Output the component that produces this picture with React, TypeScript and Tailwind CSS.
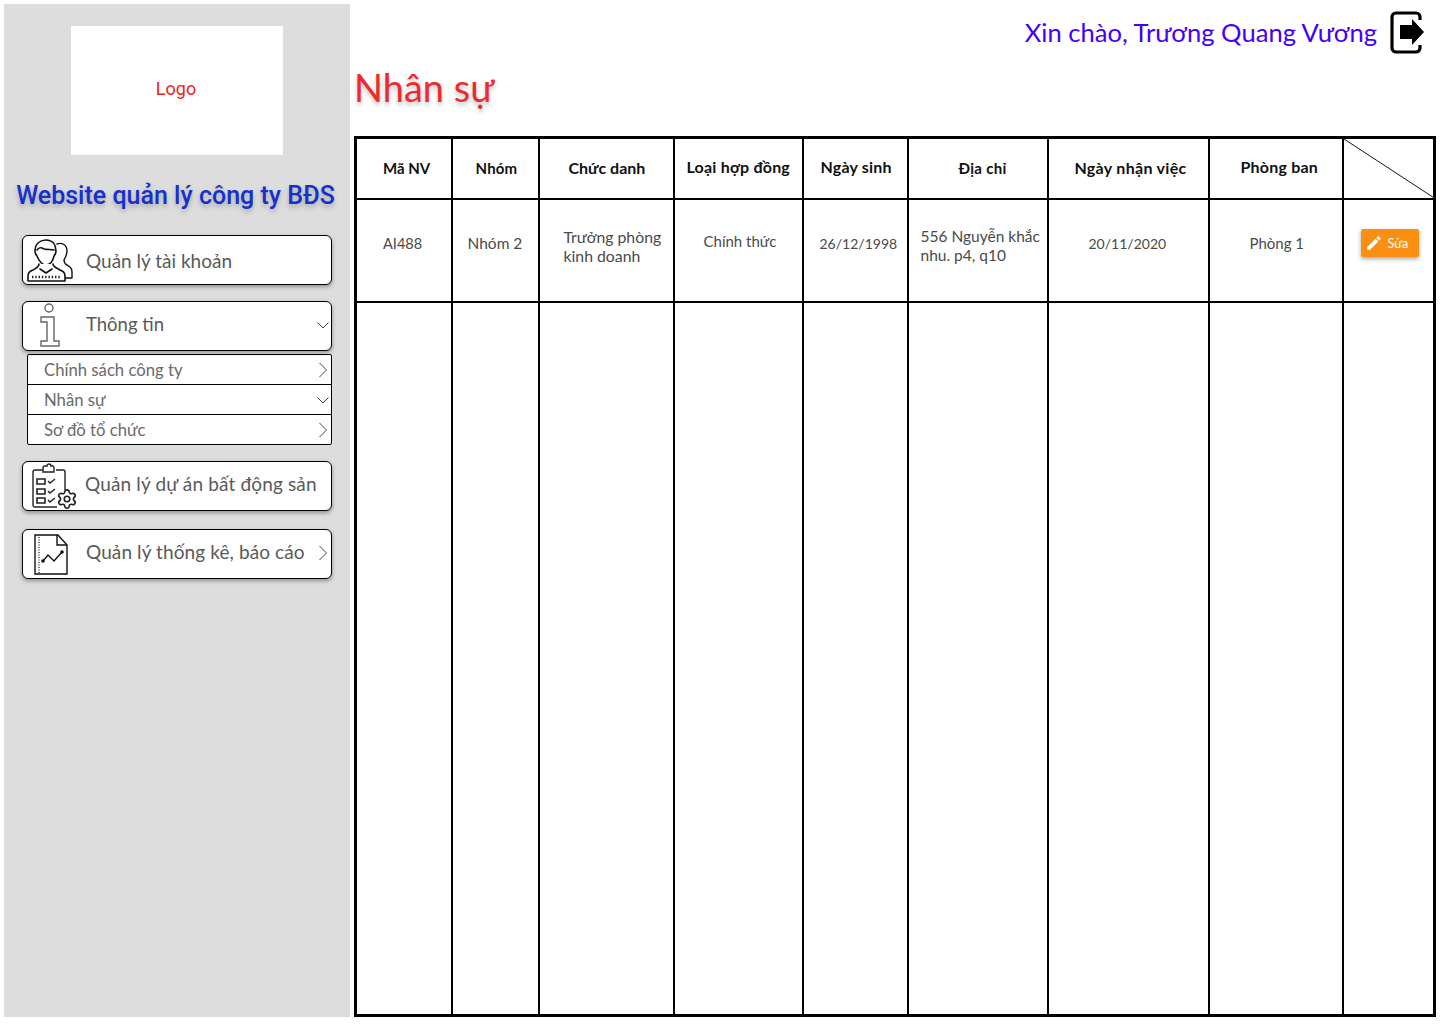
import React from "react";
import { Settings } from "lucide-react";

const quick = "font-['Lato','Noto_Sans',sans-serif]";
const roboto = "font-['Roboto',sans-serif]";

const Chevron = ({ down }: { down?: boolean }) => (
  <svg width="14" height="16" viewBox="0 0 14 16" fill="none" stroke="#444" strokeWidth="1">
    {down ? <path d="M1.500 5.500 7 11l5.500-5.500" /> : <path d="M3.500 1l7 7-7 7" />}
  </svg>
);

const PersonIcon = () => (
  <svg width="46" height="43" viewBox="0 0 46 43" fill="none" stroke="#111" strokeWidth="1.600" strokeLinejoin="round" strokeLinecap="round">
    <path d="M30 5c5-2 10 1 10 7 0 4-2 7-3 9 0 3 1 4 3 5 3 2 5 3 5 7v6h-7" strokeWidth="1.400" />
    <path d="M8 12C8 4 14 1 19 1c7 0 10 5 10 11 0 3-1 4-2 5-1 5-4 9-8 9s-7-4-9-9c-1-1-2-2-2-5z" fill="#fff" />
    <path d="M10 11c2-3 4-3 7-1 4 1 7 0 10 1" />
    <path d="M12 25c0 3-3 4-6 6-3 1-5 3-5 6v5h37v-5c0-3-2-5-5-6-3-2-7-3-7-6" fill="#fff" />
    <path d="M13 30l6 4 6-4" />
    <path d="M5 38h28" strokeDasharray="1.300 2" strokeWidth="2.600" strokeLinecap="butt" />
  </svg>
);

const InfoIcon = () => (
  <svg width="22" height="44" viewBox="0 0 22 44" fill="none" stroke="#666" strokeWidth="1.400">
    <circle cx="10" cy="5" r="4" />
    <path d="M2 14h13v24h5v5H2v-5h6V19H2z" />
  </svg>
);

const ProjectIcon = () => (
  <svg width="46" height="47" viewBox="0 0 46 47" fill="none" stroke="#222" strokeWidth="1.400">
    <path d="M24 7h7a2 2 0 0 1 2 2v18M25 44H3a2 2 0 0 1-2-2V9a2 2 0 0 1 2-2h8" />
    <path d="M11 9V5a2 2 0 0 1 2-2h2a2 2 0 0 1 4 0 2 2 0 0 1 3 2v4z" />
    <path d="M5 16h8v5H5zM5 26h8v5H5zM5 35h8v5H5z" strokeWidth="1.600" />
    <path d="M16 18l2 2 5-4M16 28l2 2 5-4M16 37l2 2 5-4" />
    <Settings x="24" y="25" width="22" height="22" strokeWidth="1.800" color="#222" />
  </svg>
);

const ChartIcon = () => (
  <svg width="34" height="41" viewBox="0 0 34 41" fill="none" stroke="#111" strokeWidth="1.400">
    <path d="M1 1h23l9 10v29H1z" />
    <path d="M23 1v10h10" />
    <path d="M5 3v36" strokeDasharray="1 1.500" strokeWidth="1.200" />
    <path d="M9 27l5-6 6 6 8-9" strokeWidth="1.400" />
    <circle cx="9" cy="27" r="1.100" fill="#111" />
    <circle cx="28" cy="18" r="1.100" fill="#111" />
  </svg>
);

const LogoutIcon = () => (
  <svg width="34" height="43" viewBox="0 0 34 43" fill="none">
    <path d="M30 9V6a4 4 0 0 0-4-4H6a4 4 0 0 0-4 4v31a4 4 0 0 0 4 4h20a4 4 0 0 0 4-4v-3" stroke="#000" strokeWidth="3.200" />
    <path d="M10 14h12V8l12 13-12 13v-6H10z" fill="#000" />
  </svg>
);

type MenuProps = {
  icon: React.ReactNode;
  iconCls: string;
  label: string;
  labelCls?: string;
  right?: React.ReactNode;
  className?: string;
};

const MenuCard = ({ icon, iconCls, label, labelCls, right, className }: MenuProps) => (
  <div className={`relative flex h-[50px] w-[310px] items-center rounded-[6px] border border-black bg-white shadow-[0_2px_4px_rgba(0,0,0,0.35)] ${className ?? ""}`}>
    <div className={`flex w-[63px] shrink-0 ${iconCls}`}>{icon}</div>
    <span className={`text-[#5a5a5a] ${labelCls ?? "text-[19px]"}`}>{label}</span>
    {right && <span className="absolute right-[1px] top-[15px]">{right}</span>}
  </div>
);

const SubRow = ({ label, down }: { label: string; down?: boolean }) => (
  <div className="flex h-[30px] items-center justify-between border-b border-black pl-[16px] pr-[1px] text-[16.700px] text-[#6a6a6a] last:h-[29px] last:border-b-0">
    <span className="pt-[2px]">{label}</span>
    <Chevron down={down} />
  </div>
);

const headers = [
  { w: "w-[96px]", label: "Mã NV", cls: "pl-[26px] text-[15px]" },
  { w: "w-[87px]", label: "Nhóm", cls: "pl-[23px] text-[15px] tracking-[0.200px]" },
  { w: "w-[135px]", label: "Chức danh", cls: "pl-[29px] text-[16px]" },
  { w: "w-[129px]", label: "Loại hợp đồng", cls: "pl-[12px] pb-[3px] text-[16px] tracking-[0.200px]" },
  { w: "w-[105px]", label: "Ngày sinh", cls: "pl-[17px] pb-[3px] text-[16px] tracking-[0.200px]" },
  { w: "w-[140px]", label: "Địa chỉ", cls: "pl-[50px] text-[15px] tracking-[0.300px]" },
  { w: "w-[161px]", label: "Ngày nhận việc", cls: "pl-[26px] text-[16px] tracking-[0.300px]" },
  { w: "w-[134px]", label: "Phòng ban", cls: "pl-[31px] pb-[3px] text-[16px] tracking-[0.200px]" },
];

const cells = [
  { lines: ["AI488"], cls: "pl-[26px] pb-[13px] text-[14.500px]" },
  { lines: ["Nhóm 2"], cls: "pl-[15px] pb-[13px] text-[15.500px]" },
  { lines: ["Trưởng phòng", "kinh doanh"], cls: "pl-[24px] pb-[9px] text-[15.800px]" },
  { lines: ["Chính thức"], cls: "pl-[29px] pb-[17px] text-[15px]" },
  { lines: ["26/12/1998"], cls: "pl-[16px] pb-[13px] text-[14px]" },
  { lines: ["556 Nguyễn khắc", "nhu. p4, q10"], cls: "pl-[12px] pb-[8px] text-[15.500px]" },
  { lines: ["20/11/2020"], cls: "pl-[40px] pb-[13px] text-[14px]" },
  { lines: ["Phòng 1"], cls: "pl-[40px] pb-[13px] text-[15px]" },
];

export default function App() {
  return (
    <div className={`flex h-[1024px] w-[1440px] overflow-hidden bg-white ${quick}`}>
      <aside className="ml-[4px] mt-[4px] h-[1013px] w-[346px] shrink-0 bg-[#dddddd]">
        <div className={`ml-[67px] mt-[22px] flex h-[129px] w-[212px] items-center justify-center bg-white pb-[4px] pr-[2px] text-[18px] text-[#ee2222] ${roboto}`}>
          Logo
        </div>
        <h2 className={`mt-[26px] pr-[3px] text-center text-[25px] leading-[30px] font-medium text-[#1530cf] [text-shadow:0_3px_5px_rgba(0,0,0,0.25)] ${roboto}`}>
          Website quản lý công ty BĐS
        </h2>
        <nav className="ml-[18px] mt-[24px] flex flex-col">
          <MenuCard icon={<PersonIcon />} iconCls="pl-[4px]" label="Quản lý tài khoản" labelCls="pt-[2px] text-[19px]" />
          <MenuCard icon={<InfoIcon />} iconCls="pl-[16px] pb-[3px]" label="Thông tin" labelCls="pb-[2px] text-[18.500px]" right={<Chevron down />} className="mt-[16px]" />
          <div className="ml-[5px] mt-[3px] w-[305px] rounded-[2px] border border-black bg-white">
            <SubRow label="Chính sách công ty" />
            <SubRow label="Nhân sự" down />
            <SubRow label="Sơ đồ tổ chức" />
          </div>
          <MenuCard icon={<ProjectIcon />} iconCls="pl-[9px]" label="Quản lý dự án bất động sản" labelCls="-ml-[1px] pb-[3px] text-[19px] tracking-[0.150px]" className="mt-[16px]" />
          <MenuCard icon={<ChartIcon />} iconCls="pl-[11px]" label="Quản lý thống kê, báo cáo" labelCls="pb-[3px] text-[19px] tracking-[0.100px]" right={<Chevron />} className="mt-[18px]" />
        </nav>
      </aside>

      <main className="ml-[4px] flex w-[1082px] shrink-0 flex-col">
        <div className="mt-[11px] flex h-[43px] items-center justify-end pr-[12px]">
          <span className="mr-[13px] text-[25.600px] text-[#4400ff]">Xin chào, Trương Quang Vương</span>
          <LogoutIcon />
        </div>
        <h1 className="mt-[10px] h-[72px] text-[38px] leading-[46px] text-[#ee2a2a] [text-shadow:0_3px_4px_rgba(0,0,0,0.25)]">
          Nhân sự
        </h1>
        <table className="h-[881px] w-[1082px] table-fixed border-collapse border-[3px] border-black">
          <colgroup>
            {headers.map((h) => (
              <col key={h.label} className={h.w} />
            ))}
            <col />
          </colgroup>
          <thead>
            <tr className="h-[61px]">
              {headers.map((h) => (
                <th key={h.label} className={`border-2 border-black text-left font-bold text-[#111] ${h.cls}`}>
                  {h.label}
                </th>
              ))}
              <th className="relative border-2 border-black p-0">
                <svg className="absolute inset-0 h-full w-full" viewBox="0 0 90 60" preserveAspectRatio="none">
                  <path d="M0 0 90 60" stroke="#111" strokeWidth="1" />
                </svg>
              </th>
            </tr>
          </thead>
          <tbody>
            <tr className="h-[103px]">
              {cells.map((c) => (
                <td key={c.lines[0]} className={`border-2 border-black leading-[19px] text-[#4a4a4a] ${c.cls}`}>
                  {c.lines.map((l) => (
                    <div key={l}>{l}</div>
                  ))}
                </td>
              ))}
              <td className="border-2 border-black pb-[15px] pl-[17px]">
                <button className="flex h-[28px] w-[58px] items-center gap-[5px] rounded-[2px] bg-[#fb8f12] pl-[4px] text-[12.500px] text-white shadow-[0_2px_4px_rgba(0,0,0,0.35)]">
                  <svg width="18" height="18" viewBox="0 0 24 24" fill="#fff">
                    <path d="M3 17.250V21h3.750L17.810 9.940l-3.750-3.750L3 17.250zM20.710 7.040c.390-.390.390-1.020 0-1.410l-2.340-2.340c-.390-.390-1.020-.390-1.410 0l-1.830 1.830 3.750 3.750 1.830-1.830z" />
                  </svg>
                  <span className="pt-[3px]">Sửa</span>
                </button>
              </td>
            </tr>
            <tr>
              {Array.from({ length: 9 }).map((_, i) => (
                <td key={i} className="border-2 border-black" />
              ))}
            </tr>
          </tbody>
        </table>
      </main>
    </div>
  );
}
